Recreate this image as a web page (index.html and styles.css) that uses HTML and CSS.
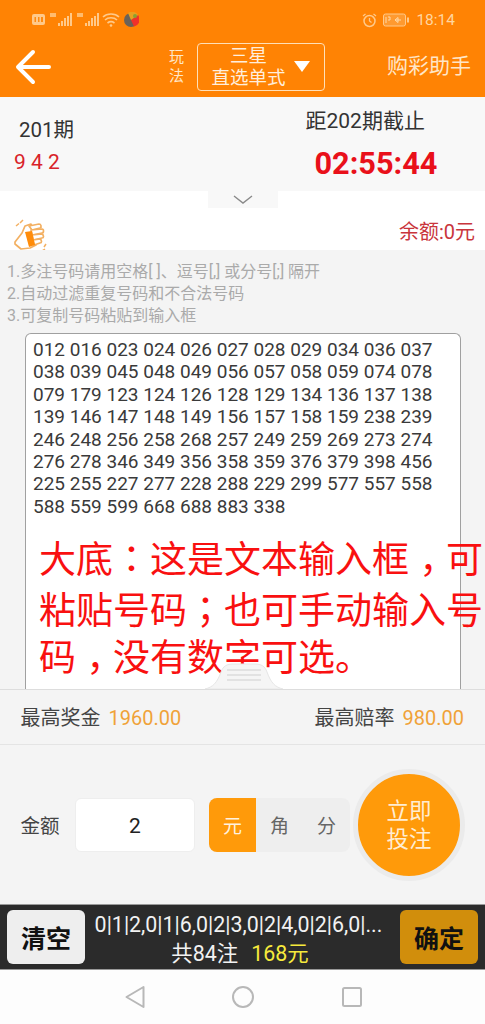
FILE: index.html
```html
<!DOCTYPE html>
<html lang="zh-CN">
<head>
<meta charset="utf-8">
<title>三星直选单式</title>
<link rel="stylesheet" href="styles.css">
</head>
<body>
<div class="app">
  <header class="head">
    <div class="status">
      <div class="status-left">
        <svg class="sicons" width="90" height="18" viewBox="0 0 90 18">
          <rect x="0" y="3" width="13" height="11" rx="2" fill="#ffc98a"/>
          <rect x="2.500" y="6" width="1.500" height="5" fill="#ff8a10"/><rect x="6" y="6" width="1.500" height="5" fill="#ff8a10"/><rect x="9" y="6" width="2" height="5" fill="#ff8a10"/>
          <rect x="18" y="2" width="6" height="4" fill="#ffc98a" opacity=".8"/>
          <g fill="#ffc98a"><rect x="26" y="12" width="2" height="3"/><rect x="29" y="10" width="2" height="5"/><rect x="32" y="7" width="2" height="8"/><rect x="35" y="5" width="2" height="10"/><rect x="38" y="2" width="2" height="13"/></g>
          <rect x="45" y="2" width="6" height="4" fill="#ffc98a" opacity=".8"/>
          <g fill="#ffc98a"><rect x="53" y="12" width="2" height="3"/><rect x="56" y="10" width="2" height="5"/><rect x="59" y="7" width="2" height="8"/><rect x="62" y="5" width="2" height="10"/><rect x="65" y="2" width="2" height="13"/></g>
          <g fill="none" stroke="#ffc98a" stroke-width="1.600"><path d="M71 6c4-4 12-4 16 0"/><path d="M73 9c3-3 9-3 12 0"/><path d="M75.500 12c2-1.500 5-1.500 7 0"/></g>
          <circle cx="79" cy="14.500" r="1.300" fill="#ffc98a"/>
        </svg>
        <svg class="appdot" width="16" height="16" viewBox="0 0 16 16">
          <circle cx="8" cy="8" r="7" fill="#6b6258"/>
          <path d="M8 8L15 3A7 7 0 0 1 11 14.500Z" fill="#f0312a"/>
          <path d="M8 8L5 1A7 7 0 0 1 15 3Z" fill="#e8a020"/>
          <circle cx="12" cy="4" r="2" fill="#8aa030"/>
        </svg>
      </div>
      <div class="status-right">
        <svg width="15" height="15" viewBox="0 0 15 15"><circle cx="7.500" cy="8" r="5.500" fill="none" stroke="#ffc98a" stroke-width="1.500"/><path d="M7.500 5v3l2 1.500M1 3l2.500-2M14 3l-2.500-2" fill="none" stroke="#ffc98a" stroke-width="1.300"/></svg>
        <svg width="27" height="14" viewBox="0 0 27 14"><rect x=".5" y="1" width="22" height="12" rx="2" fill="#ff9a30" stroke="#ffc98a"/><rect x="24" y="4.500" width="2" height="5" fill="#ffc98a"/><path d="M3 4v6M5 4h2v3H5M12 7h6M12 7l3-2.500v5z" fill="none" stroke="#ffd9a8"/></svg>
        <span class="clock">18:14</span>
      </div>
    </div>
    <nav class="nav">
      <svg class="back" width="36" height="36" viewBox="0 0 36 36"><path d="M34 18H4M18 3L3 18l15 15" fill="none" stroke="#fff" stroke-width="4" stroke-linecap="round" stroke-linejoin="round"/></svg>
      <div class="play">
        <div class="play-label"><span>玩</span><span>法</span></div>
        <div class="select">
          <div class="select-text"><span>三星</span><span>直选单式</span></div>
          <svg class="caret" width="16" height="11" viewBox="0 0 16 11"><path d="M0 0h16l-8 11z" fill="#fff"/></svg>
        </div>
      </div>
      <div class="helper">购彩助手</div>
    </nav>
  </header>

  <section class="info">
    <div class="issue">
      <div class="issue-no">201期</div>
      <div class="issue-balls">9 4 2</div>
    </div>
    <div class="timer">
      <div class="timer-label">距202期截止</div>
      <div class="timer-value">02:55:44</div>
    </div>
  </section>

  <section class="balance">
    <div class="pull">
      <svg width="20" height="9" viewBox="0 0 20 9"><path d="M1 1l9 7 9-7" fill="none" stroke="#8a8a8a" stroke-width="1.400"/></svg>
    </div>
    <div class="balance-row">
      <svg class="fist" width="36" height="34" viewBox="0 0 36 34">
        <g fill="#fff" stroke="#f3b062" stroke-width="1.700" stroke-linejoin="round" stroke-linecap="round">
          <path d="M2 24l7-9 3-7 6-2 3 7 2 14-6 3-9 1-6-5z"/>
          <path d="M16 8l10-2c2 0 3 3 1 4l-8 2z"/>
          <path d="M18 12l11-1c2 0 2 4 0 4l-10 2z"/>
          <path d="M19 17l10-1c2 1 2 4 0 4l-9 2z"/>
          <path d="M20 22l7-1c2 1 2 4 0 4l-6 2z"/>
        </g>
        <path d="M12 14l7-1 3 14-6 2z" fill="#ff8c0a"/>
        <path d="M7 5l3-3M3 8l3-2.500M31 29l2-3M29 33l3-2" stroke="#f3b062" stroke-width="1.500" fill="none"/>
      </svg>
      <div class="balance-text">余额:0元</div>
    </div>
  </section>

  <main class="editor">
    <ol class="tips">
      <li>1.多注号码请用空格[ ]、逗号[,] 或分号[;] 隔开</li>
      <li>2.自动过滤重复号码和不合法号码</li>
      <li>3.可复制号码粘贴到输入框</li>
    </ol>
    <div class="inputbox">
      <p class="codes">012 016 023 024 026 027 028 029 034 036 037 038 039 045 048 049 056 057 058 059 074 078 079 179 123 124 126 128 129 134 136 137 138 139 146 147 148 149 156 157 158 159 238 239 246 248 256 258 268 257 249 259 269 273 274 276 278 346 349 356 358 359 376 379 398 456 225 255 227 277 228 288 229 299 577 557 558 588 559 599 668 688 883 338</p>
      <p class="note"><span>大底<span class="mid" lang="ja">：</span>这是文本输入框<span class="low">，</span>可</span><span>粘贴号码<span class="mid" lang="ja">；</span>也可手动输入号</span><span>码<span class="low">，</span>没有数字可选。</span></p>
      <svg class="handle" width="78" height="26" viewBox="0 0 78 26">
        <path d="M0 26C8 24 12 20 16 9 18 3 22 1 28 1H50C56 1 60 3 62 9 66 20 70 24 78 26Z" fill="#f5f5f5" stroke="#e6e6e6"/>
        <path d="M22 7H56M22 12H56M22 17H56" stroke="#dcdcdc" stroke-width="1.500"/>
      </svg>
    </div>
  </main>

  <section class="stats">
    <div><span class="stat-label">最高奖金</span><span class="stat-value">1960.00</span></div>
    <div><span class="stat-label">最高赔率</span><span class="stat-value">980.00</span></div>
  </section>

  <section class="amount">
    <span class="amount-label">金额</span>
    <div class="amount-input">2</div>
    <div class="units">
      <span class="unit unit-on">元</span>
      <span class="unit">角</span>
      <span class="unit">分</span>
    </div>
    <div class="buy"><span>立即</span><span>投注</span></div>
  </section>

  <section class="cart">
    <button class="cart-btn cart-clear">清空</button>
    <div class="cart-info">
      <div class="cart-codes">0|1|2,0|1|6,0|2|3,0|2|4,0|2|6,0|...</div>
      <div class="cart-sum">共84注<span class="cart-money">168元</span></div>
    </div>
    <button class="cart-btn cart-ok">确定</button>
  </section>

  <footer class="sysnav">
    <svg width="20" height="24" viewBox="0 0 20 24"><path d="M18.500 2V22L1.500 12Z" fill="none" stroke="#b8b8b8" stroke-width="2" stroke-linejoin="round"/></svg>
    <svg width="22" height="22" viewBox="0 0 22 22"><circle cx="11" cy="11" r="10" fill="none" stroke="#b8b8b8" stroke-width="2"/></svg>
    <svg width="20" height="20" viewBox="0 0 20 20"><rect x="1" y="1" width="18" height="18" rx="1.500" fill="none" stroke="#b8b8b8" stroke-width="2"/></svg>
  </footer>
</div>
</body>
</html>
```
FILE: styles.css
```css
* { box-sizing: border-box; }
html, body { margin: 0; padding: 0; }
body {
  width: 485px;
  height: 1024px;
  overflow: hidden;
  background: #f4f4f4;
  font-family: Roboto, "Noto Sans CJK SC", sans-serif;
  color: #333;
}
.app { width: 485px; height: 1024px; display: flex; flex-direction: column; overflow: hidden; }

/* header */
.head { height: 97px; background: #ff8304; flex: none; }
.status { height: 36px; padding: 11px 30px 0 32px; display: flex; justify-content: space-between; align-items: flex-start; }
.status-left { display: flex; align-items: center; gap: 1px; }
.status-right { display: flex; align-items: center; gap: 6px; }
.clock { font-size: 15.500px; line-height: 18px; color: #ffd6a0; }
.nav { height: 61px; display: flex; align-items: flex-start; padding-left: 15px; }
.back { margin-top: 13px; flex: none; }
.play { display: flex; align-items: center; margin-left: 118px; margin-top: 7px; }
.play-label { display: flex; flex-direction: column; font-size: 15px; line-height: 19px; color: #ffe6c8; width: 28px; }
.select { width: 128px; height: 48px; border: 1.500px solid #ffe0b8; border-radius: 4px; display: flex; align-items: center; padding-left: 13px; }
.select-text { width: 75px; display: flex; flex-direction: column; align-items: center; font-size: 18.500px; line-height: 22px; color: #ffeedd; }
.caret { margin-left: 8px; margin-top: -1px; }
.helper { margin-left: auto; margin-right: 14px; margin-top: 15px; font-size: 21px; line-height: 30px; color: #ffe6c8; }

/* info */
.info { height: 94px; background: #f8f8f8; flex: none; display: flex; justify-content: space-between; }
.issue { padding: 20px 0 0 14px; }
.issue-no { margin-left: 5px; font-size: 20.500px; line-height: 26px; color: #333; }
.issue-balls { margin-top: 6px; font-size: 21px; line-height: 26px; color: #d9232a; }
.timer { width: 179.500px; padding-top: 11px; }
.timer-label { font-size: 21px; line-height: 26px; color: #333; }
.timer-value { margin: 12px 0 0 9px; font-size: 30.700px; line-height: 36px; font-weight: 700; color: #e9101a; }

/* balance */
.balance { height: 59px; background: #fff; flex: none; }
.pull { width: 70px; height: 17px; margin: 0 auto; background: #f8f8f8; display: flex; justify-content: center; align-items: center; }
.balance-row { display: flex; justify-content: space-between; align-items: flex-start; padding: 10px 10px 0 13px; height: 42px; overflow: hidden; }
.fist { flex: none; }
.balance-text { margin-top: 1px; font-size: 20px; line-height: 26px; color: #c9353c; }

/* editor */
.editor { height: 439px; background: #f4f4f4; flex: none; }
.tips { list-style: none; margin: 0; padding: 11px 0 0 7px; font-size: 16px; line-height: 22px; color: #aaa; }
.inputbox { position: relative; width: 436px; height: 356px; margin: 6px 0 0 25px; padding: 5px 0 0 7px; background: #fff; border: 1.500px solid #a0a0a0; border-bottom: 0; border-radius: 6px 6px 0 0; }
.codes { margin: 0; width: 420px; font-size: 19px; line-height: 22.400px; color: #3a3a3a; }
.note { margin: 16px 0 0 6px; width: 460px; display: flex; flex-direction: column; font-size: 37px; line-height: 47.500px; color: #f91010; white-space: nowrap; }
.mid { font-family: "Noto Sans CJK JP", sans-serif; }
.low { font-feature-settings: "halt"; margin-left: .28em; margin-right: .22em; }
.handle { position: absolute; left: 179px; bottom: 0; display: block; }

/* stats */
.stats { height: 56px; flex: none; border-top: 1px solid #ddd; border-bottom: 1px solid #e4e4e4; padding: 0 21px 2px 20.500px; display: flex; justify-content: space-between; align-items: center; font-size: 20px; }
.stat-label { color: #444; }
.stat-value { margin-left: 8px; color: #f0a238; }

/* amount */
.amount { height: 159px; flex: none; padding: 53px 0 0 20.500px; display: flex; align-items: flex-start; position: relative; }
.amount-label { width: 54.500px; font-size: 19.500px; line-height: 58px; color: #444; }
.amount-input { width: 120px; height: 54px; background: #fff; border: 1px solid #eee; border-radius: 6px; text-align: center; font-size: 21px; line-height: 54px; color: #222; }
.units { width: 141px; height: 54px; margin-left: 14px; display: flex; background: #eee; border-radius: 8px; overflow: hidden; }
.unit { flex: 1; text-align: center; font-size: 19px; line-height: 58px; color: #666; }
.unit-on { background: #ff9a0a; color: #fff2df; }
.buy { position: absolute; left: 353px; top: 24px; width: 112px; height: 112px; border-radius: 50%; background: #ff9a0a; border: 5.500px solid #ebebeb; display: flex; flex-direction: column; align-items: center; justify-content: center; font-size: 22.500px; line-height: 28px; color: #ffedd2; }

/* cart */
.cart { height: 66px; flex: none; background: #2b2b2b; border-top: 1px solid #999; border-bottom: 1px solid #999; display: flex; align-items: center; justify-content: space-between; padding: 0 7px; }
.cart-btn { width: 78px; height: 54px; padding: 0; border: 0; border-radius: 6px; font-family: inherit; font-size: 25px; font-weight: 700; color: #111; flex: none; }
.cart-clear { background: #eee; }
.cart-ok { background: #d18e0c; }
.cart-info { flex: 1; padding: 3px 5px 0 0; text-align: center; color: #f2f2f2; white-space: nowrap; }
.cart-codes { padding-right: 3px; font-size: 21.400px; line-height: 29px; }
.cart-sum { font-size: 21.400px; line-height: 29px; }
.cart-money { margin-left: 13px; color: #f6ea3c; }

/* system nav */
.sysnav { height: 54px; flex: none; background: #fdfdfd; display: flex; align-items: center; gap: 87.500px; padding: 0 0 1px 124.500px; }
```
